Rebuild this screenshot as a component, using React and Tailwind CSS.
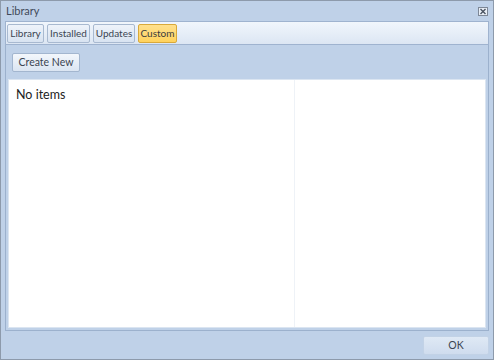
import React from 'react';

const font = { fontFamily: 'Lato, "Noto Sans", sans-serif' };

function Tab({ label, width, active }) {
  return (
    <button
      className={
        active
          ? 'h-[19px] shrink-0 rounded-[2px] border border-[#d9a93a] bg-gradient-to-b from-[#ffe08c] to-[#ffd25c] text-[10px] text-[#3b3b3b] leading-none'
          : 'h-[19px] shrink-0 rounded-[2px] border border-[#a8b9d0] bg-gradient-to-b from-[#eef3fa] to-[#d8e3f1] text-[10px] text-[#3b4552] leading-none'
      }
      style={{ width }}
    >
      {label}
    </button>
  );
}

export default function App() {
  return (
    <div
      className="w-[494px] h-[360px] bg-[#bfd1e8] border border-[#8d9aab] flex flex-col overflow-hidden"
      style={font}
    >
      {/* Title bar */}
      <div className="h-[20px] flex items-center justify-between pl-[5px] pr-[4px] shrink-0">
        <span className="text-[11px] text-[#3f4a5a]">Library</span>
        <svg width="10" height="9" viewBox="0 0 10 9" className="mr-[1px]">
          <rect x="0.5" y="0.5" width="9" height="8" fill="#e8eef6" stroke="#7d8796" />
          <path d="M2.5 2 L7.5 7 M7.5 2 L2.5 7" stroke="#4a5361" strokeWidth="1.4" />
        </svg>
      </div>

      {/* Tabs */}
      <div className="mx-[4px] h-[24px] shrink-0 flex items-center gap-[3px] px-[1px] border border-[#9fb3cf] bg-gradient-to-b from-[#f1f6fc] to-[#dce6f3]">
        <Tab label="Library" width={37} />
        <Tab label="Installed" width={43} />
        <Tab label="Updates" width={42} />
        <Tab label="Custom" width={39} active />
      </div>

      {/* Panel */}
      <div className="mx-[4px] flex-1 flex flex-col border-x border-b border-[#9cb1cd] bg-[#bfd1e8]">
        <div className="h-[34px] flex items-center px-[6px] shrink-0">
          <button className="h-[19px] w-[68px] rounded-[2px] border border-[#a3b6cf] bg-gradient-to-b from-[#f3f7fc] to-[#dbe5f2] text-[10.5px] text-[#3b4552] leading-none">
            Create New
          </button>
        </div>
        <div className="flex-1 mx-[2px] mb-[2px] flex bg-white border border-[#dbe5f1]">
          <div className="w-[286px] border-r border-[#eef2f7] px-[7px] pt-[1px]">
            <span className="text-[12.5px] text-[#222] leading-[16px]">No items</span>
          </div>
          <div className="flex-1" />
        </div>
      </div>

      {/* Footer */}
      <div className="h-[28px] shrink-0 flex items-center justify-end pr-[4px]">
        <button className="h-[19px] w-[66px] rounded-[2px] border border-[#c2d2e6] bg-gradient-to-b from-[#dfe9f5] to-[#cfdcee] text-[10.5px] text-[#3b4552] leading-none">
          OK
        </button>
      </div>
    </div>
  );
}
